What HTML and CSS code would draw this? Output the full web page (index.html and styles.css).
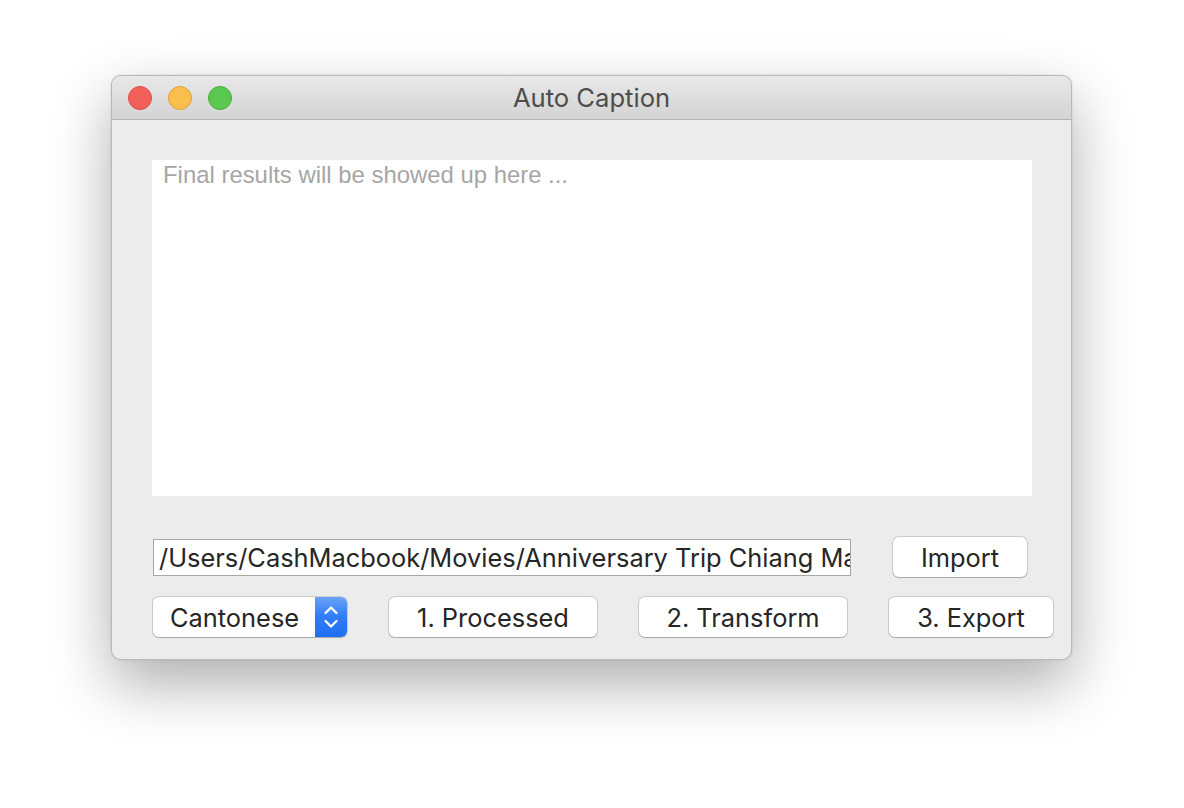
FILE: index.html
```html
<!DOCTYPE html>
<html>
<head>
<meta charset="utf-8">
<link rel="stylesheet" href="styles.css">
</head>
<body>
<div class="window">
  <div class="titlebar">
    <div class="lights">
      <span class="light red"></span>
      <span class="light yellow"></span>
      <span class="light green"></span>
    </div>
    <div class="title">Auto Caption</div>
  </div>
  <div class="content">
    <div class="results">Final results will be showed up here ...</div>
    <div class="row row1">
      <div class="pathfield">/Users/CashMacbook/Movies/Anniversary Trip Chiang Mai</div>
      <div class="btn import">Import</div>
    </div>
    <div class="row row2">
      <div class="popup">
        <span class="popup-label">Cantonese</span>
        <span class="stepper">
          <svg width="32" height="40" viewBox="0 0 32 40">
            <path d="M10.5 16 L16 10.5 L21.5 16" fill="none" stroke="#fff" stroke-width="2.2" stroke-linecap="round" stroke-linejoin="round"/>
            <path d="M10.5 24 L16 29.5 L21.5 24" fill="none" stroke="#fff" stroke-width="2.2" stroke-linecap="round" stroke-linejoin="round"/>
          </svg>
        </span>
      </div>
      <div class="btn b1">1. Processed</div>
      <div class="btn b2">2. Transform</div>
      <div class="btn b3">3. Export</div>
    </div>
  </div>
</div>
</body>
</html>
```

FILE: styles.css
```css
html, body {
  margin: 0;
  padding: 0;
  background: #ffffff;
}
body {
  width: 1184px;
  height: 808px;
  overflow: hidden;
  padding-top: 75px;
  padding-left: 111px;
  box-sizing: border-box;
  font-family: Inter, "Liberation Sans", sans-serif;
}
.window {
  width: 961px;
  height: 585px;
  box-sizing: border-box;
  border: 1px solid #b9b9b9;
  border-radius: 10px;
  background: #ececec;
  overflow: hidden;
  box-shadow: 0 24px 60px rgba(0,0,0,0.32), 0 0 2px rgba(0,0,0,0.15);
  display: flex;
  flex-direction: column;
}
.titlebar {
  height: 44px;
  box-sizing: border-box;
  flex: none;
  background: linear-gradient(#e8e8e8, #d4d4d4);
  border-bottom: 1px solid #b3b3b3;
  display: flex;
  align-items: center;
  position: relative;
}
.lights {
  display: flex;
  gap: 16px;
  padding-left: 16px;
  position: relative;
  z-index: 1;
}
.light {
  width: 24px;
  height: 24px;
  border-radius: 50%;
  box-sizing: border-box;
}
.red { background: #f2605a; border: 1px solid #de4a43; }
.yellow { background: #f9be4d; border: 1px solid #e0a237; }
.green { background: #5bc84f; border: 1px solid #47ad3b; }
.title {
  position: absolute;
  left: 0;
  right: 0;
  top: 0;
  bottom: 0;
  display: flex;
  align-items: center;
  justify-content: center;
  font-size: 25.6px;
  color: #4d4d4d;
}
.content {
  padding: 40px 0 0 40px;
  display: flex;
  flex-direction: column;
}
.results {
  width: 880px;
  height: 336px;
  background: #ffffff;
  box-sizing: border-box;
  padding: 1px 11px;
  font-family: "Liberation Sans", Arial, sans-serif;
  font-size: 23.9px;
  color: #a6a6a6;
}
.row {
  display: flex;
  align-items: center;
  gap: 42px;
}
.row1 {
  margin-top: 41px;
  height: 40px;
}
.row2 {
  margin-top: 20px;
  height: 40px;
}
.pathfield {
  width: 698px;
  height: 37px;
  box-sizing: border-box;
  margin-left: 1px;
  background: #ffffff;
  border: 1px solid #a7a7a7;
  font-size: 25.4px;
  line-height: 35px;
  color: #262626;
  padding-left: 5px;
  white-space: nowrap;
  overflow: hidden;
}
.btn {
  height: 40px;
  box-sizing: border-box;
  background: #ffffff;
  border-radius: 6px;
  box-shadow: 0 0 0 1px rgba(0,0,0,0.13), 0 1px 1px rgba(0,0,0,0.18);
  font-size: 25.4px;
  color: #262626;
  display: flex;
  align-items: center;
  justify-content: center;
}
.import { width: 134px; }
.b1 { width: 208px; }
.b2 { width: 208px; }
.b3 { width: 164px; }
.popup {
  width: 194px;
  height: 40px;
  margin-left: 1px;
  box-sizing: border-box;
  background: #ffffff;
  border-radius: 6px;
  box-shadow: 0 0 0 1px rgba(0,0,0,0.13), 0 1px 1px rgba(0,0,0,0.18);
  display: flex;
  align-items: center;
  justify-content: space-between;
  overflow: hidden;
}
.popup-label {
  font-size: 25.4px;
  color: #262626;
  padding-left: 17px;
}
.stepper {
  width: 32px;
  height: 40px;
  background: linear-gradient(#6aa2f7, #2f7cf6 50%, #1f6ef5);
  display: flex;
}
```
